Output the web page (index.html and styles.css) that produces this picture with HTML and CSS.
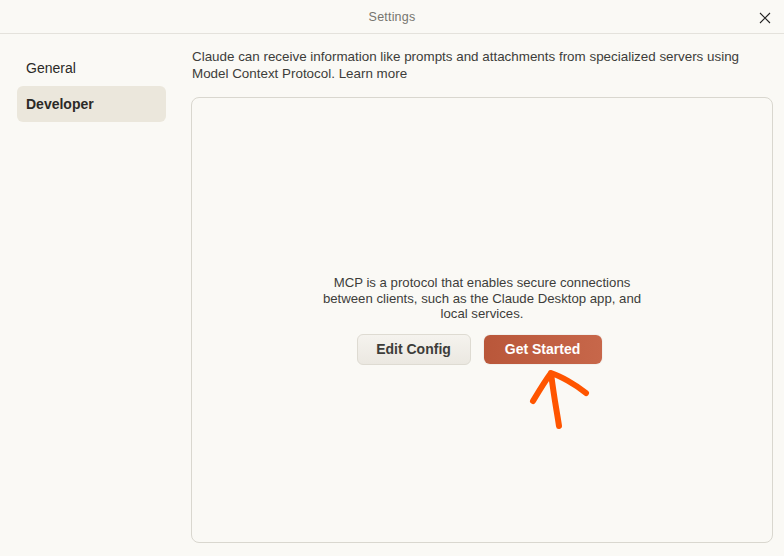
FILE: index.html
```html
<!DOCTYPE html>
<html lang="en">
<head>
    <meta charset="UTF-8">
    <title>Settings</title>
    <link rel="stylesheet" href="styles.css">
</head>
<body>
    <div class="titlebar">
        <span class="title">Settings</span>
        <span class="close">
            <svg width="12" height="12" viewBox="0 0 12 12"><path d="M1 1 L11 11 M11 1 L1 11" stroke="#222" stroke-width="1.1" fill="none"/></svg>
        </span>
    </div>

    <div class="main">
        <nav class="sidebar">
            <div class="nav-item">General</div>
            <div class="nav-item active">Developer</div>
        </nav>

        <section class="content">
            <p class="intro">Claude can receive information like prompts and attachments from specialized servers using Model Context Protocol. <a href="#">Learn more</a></p>

            <div class="panel">
                <p class="panel-text">MCP is a protocol that enables secure connections between clients, such as the Claude Desktop app, and local services.</p>
                <div class="actions">
                    <button class="btn btn-secondary">Edit Config</button>
                    <button class="btn btn-primary">Get Started</button>
                    <svg class="arrow" width="70" height="70" viewBox="0 0 70 70">
                        <path d="M36 64 C34 50 31 36 28 11 M10 39 C16 29 22 19 28 11 C37 14 52 22 63 31" stroke="#ff5500" stroke-width="6" stroke-linecap="round" stroke-linejoin="round" fill="none"/>
                    </svg>
                </div>
            </div>
        </section>
    </div>
</body>
</html>
```
FILE: styles.css
```css
body {
    margin: 0;
    background-color: #faf9f5;
    font-family: "Liberation Sans", Arial, sans-serif;
    color: #3d3d3a;
    width: 784px;
    height: 556px;
    overflow: hidden;
}
.titlebar {
    height: 33px;
    border-bottom: 1px solid #e4e2dc;
    display: flex;
    align-items: center;
    justify-content: center;
    position: relative;
}
.title {
    font-size: 12.5px;
    color: #76756f;
    letter-spacing: 0.2px;
}
.close {
    position: absolute;
    right: 13px;
    top: 10px;
}
.main {
    display: flex;
    padding: 0 11px 0 17px;
}
.sidebar {
    width: 149px;
    padding-top: 16px;
    flex-shrink: 0;
}
.nav-item {
    height: 36px;
    line-height: 36px;
    padding-left: 9px;
    font-size: 14px;
    color: #2b2a27;
    border-radius: 6px;
}
.nav-item.active {
    background-color: #ebe7dc;
    font-weight: bold;
}
.content {
    flex: 1;
    margin-left: 25px;
    padding-top: 15px;
}
.intro {
    margin: 0 0 15px 1px;
    max-width: 560px;
    font-size: 13.4px;
    line-height: 16.5px;
    color: #3d3d3a;
}
.intro a {
    color: inherit;
    text-decoration: none;
}
.panel {
    height: 444px;
    border: 1px solid #d9d7cf;
    border-radius: 8px;
    display: flex;
    flex-direction: column;
    align-items: center;
    justify-content: center;
}
.panel-text {
    width: 340px;
    text-align: center;
    font-size: 13.2px;
    line-height: 15.5px;
    margin: 24px 0 12px 0;
}
.actions {
    display: flex;
    gap: 13px;
    position: relative;
    margin: 0 6px 24px 0;
}
.btn {
    font-family: inherit;
    font-size: 14px;
    font-weight: bold;
    border-radius: 6px;
    height: 31px;
    cursor: pointer;
}
.btn-secondary {
    width: 114px;
    background: linear-gradient(#f5f3ee, #ebe8e1);
    border: 1px solid #dedbd2;
    color: #3d3d3a;
}
.btn-primary {
    width: 118px;
    background: linear-gradient(90deg, #b9573a, #c7674a);
    border: none;
    color: #fff;
    margin-top: 1px;
    height: 29px;
    box-shadow: 0 0 0 1px rgba(0, 0, 0, 0.03);
}
.arrow {
    position: absolute;
    left: 166px;
    top: 28px;
}
```
